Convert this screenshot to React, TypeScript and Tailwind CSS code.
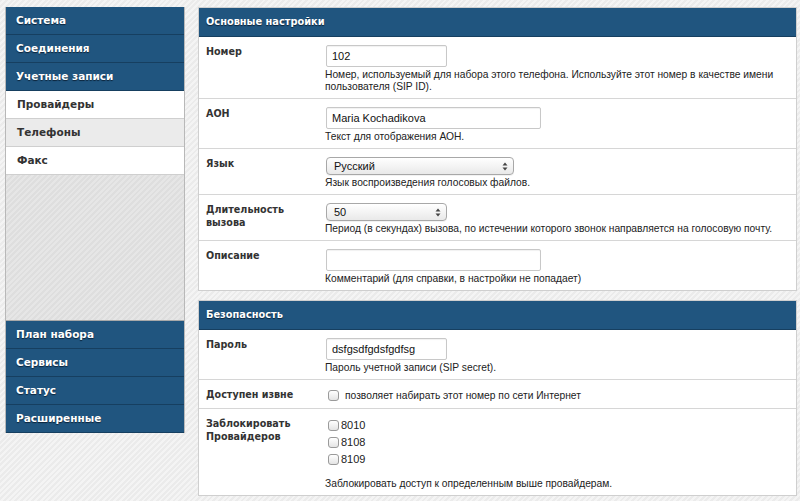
import React from "react";

const dark = "bg-[#20557f] text-white font-bold text-[10.5px] h-[28px] flex items-center pl-[10px] border-b border-[#163f60] [text-shadow:0_1px_1px_#0b2238]";

function SideDark({ label }: { label: string }) {
  return <div className={dark}>{label}</div>;
}

function SideLight({ label, gray }: { label: string; gray?: boolean }) {
  return (
    <div
      className={
        "h-[28px] flex items-center pl-[11px] border-b border-[#cfcfcf] text-[#333] font-bold text-[10.5px] " +
        (gray ? "bg-[#ebebeb]" : "bg-white")
      }
    >
      {label}
    </div>
  );
}

function Row({
  label,
  children,
  last,
}: {
  label: React.ReactNode;
  children: React.ReactNode;
  last?: boolean;
}) {
  return (
    <div className={"flex pt-[8px] pb-[5px] " + (last ? "" : "border-b border-[#d6d6d6]")}>
      <div className="w-[127px] shrink-0 pl-[7px] font-bold text-[9.6px] leading-[13px] text-[#333]">{label}</div>
      <div className="flex-1 min-w-0">{children}</div>
    </div>
  );
}

const hintFont = { fontFamily: '"Liberation Sans", Arial, sans-serif' };

function Hint({ children, className = "" }: { children: React.ReactNode; className?: string }) {
  return (
    <div className={"text-[10.25px] leading-[12px] text-[#222] mt-[2px] -ml-[1px] whitespace-nowrap " + className} style={hintFont}>
      {children}
    </div>
  );
}

function TextInput({ value, w }: { value: string; w: number }) {
  return (
    <div
      className="h-[22px] border border-[#c8c8c8] rounded-[2px] bg-white flex items-center pl-[5px] text-[11px] text-[#111] shadow-[inset_0_1px_1px_rgba(0,0,0,0.06)]"
      style={{ width: w, ...hintFont }}
    >
      {value}
    </div>
  );
}

function Select({ value, w }: { value: string; w: number }) {
  return (
    <div
      className="h-[18px] border border-[#a8a8a8] rounded-[4px] bg-gradient-to-b from-white to-[#e9e9e9] flex items-center pl-[7px] pr-[5px] text-[11px] text-[#111] shadow-[0_1px_0_rgba(0,0,0,0.05)]"
      style={{ width: w, ...hintFont }}
    >
      <span className="flex-1">{value}</span>
      <svg width="6" height="9" viewBox="0 0 6 9">
        <path d="M3 0.5 L5.5 3.5 H0.5 Z" fill="#444" />
        <path d="M3 8.5 L5.5 5.5 H0.5 Z" fill="#444" />
      </svg>
    </div>
  );
}

function Check() {
  return (
    <span className="inline-block w-[11px] h-[11px] border border-[#9a9a9a] rounded-[3px] bg-gradient-to-b from-white to-[#e4e4e4] shrink-0" />
  );
}

function Header({ label }: { label: string }) {
  return (
    <div className="h-[29px] bg-[#20557f] border-b border-[#163f60] text-white font-bold text-[9.8px] flex items-center pl-[7px] [text-shadow:0_1px_1px_#0b2238]">
      {label}
    </div>
  );
}

export default function App() {
  return (
    <div
      className="w-[800px] h-[501px] overflow-hidden flex pt-[7px] pl-[5px] bg-[#efefef] bg-[repeating-linear-gradient(135deg,#ebebeb_0px,#ebebeb_2px,#f4f4f4_2px,#f4f4f4_4px)]"
      style={{ fontFamily: '"DejaVu Sans", Verdana, sans-serif' }}
    >
      <div className="w-[180px] shrink-0 flex flex-col self-start">
        <div className="border-x border-[#b8b8b8]">
          <SideDark label="Система" />
          <SideDark label="Соединения" />
          <SideDark label="Учетные записи" />
          <SideLight label="Провайдеры" />
          <SideLight label="Телефоны" gray />
          <SideLight label="Факс" />
          <div className="h-[146px] bg-[#e2e2e2] bg-[repeating-linear-gradient(135deg,#dedede_0px,#dedede_2px,#e6e6e6_2px,#e6e6e6_4px)] border-b border-[#a9a9a9]" />
          <SideDark label="План набора" />
          <SideDark label="Сервисы" />
          <SideDark label="Статус" />
          <SideDark label="Расширенные" />
        </div>
      </div>

      <div className="ml-[13px] w-[599px] shrink-0 flex flex-col">
        <div className="border border-[#cfcfcf] bg-white">
          <Header label="Основные настройки" />
          <Row label="Номер">
            <TextInput value="102" w={121} />
            <Hint>
              Номер, используемый для набора этого телефона. Используйте этот номер в качестве имени
              <br />
              пользователя (SIP ID).
            </Hint>
          </Row>
          <Row label="АОН">
            <TextInput value="Maria Kochadikova" w={215} />
            <Hint>Текст для отображения АОН.</Hint>
          </Row>
          <Row label="Язык">
            <Select value="Русский" w={188} />
            <Hint>Язык воспроизведения голосовых файлов.</Hint>
          </Row>
          <Row
            label={
              <>
                Длительность
                <br />
                вызова
              </>
            }
          >
            <Select value="50" w={121} />
            <Hint>Период (в секундах) вызова, по истечении которого звонок направляется на голосовую почту.</Hint>
          </Row>
          <Row label="Описание" last>
            <TextInput value="" w={215} />
            <Hint>Комментарий (для справки, в настройки не попадает)</Hint>
          </Row>
        </div>

        <div className="mt-[9px] border border-[#cfcfcf] bg-white">
          <Header label="Безопасность" />
          <Row label="Пароль">
            <TextInput value="dsfgsdfgdsfgdfsg" w={121} />
            <Hint>Пароль учетной записи (SIP secret).</Hint>
          </Row>
          <Row label="Доступен извне">
            <div className="flex items-center h-[15px] pl-[2px] gap-[6px] text-[10.25px] text-[#222]" style={hintFont}>
              <Check />
              <span>позволяет набирать этот номер по сети Интернет</span>
            </div>
          </Row>
          <Row
            label={
              <>
                Заблокировать
                <br />
                Провайдеров
              </>
            }
            last
          >
            <div className="flex flex-col pl-[2px] text-[11px] text-[#222]" style={hintFont}>
              {["8010", "8108", "8109"].map((n) => (
                <div key={n} className="flex items-center h-[17px] gap-[2px]">
                  <Check />
                  <span>{n}</span>
                </div>
              ))}
            </div>
            <Hint className="mt-[10px]">Заблокировать доступ к определенным выше провайдерам.</Hint>
          </Row>
        </div>
      </div>
    </div>
  );
}
